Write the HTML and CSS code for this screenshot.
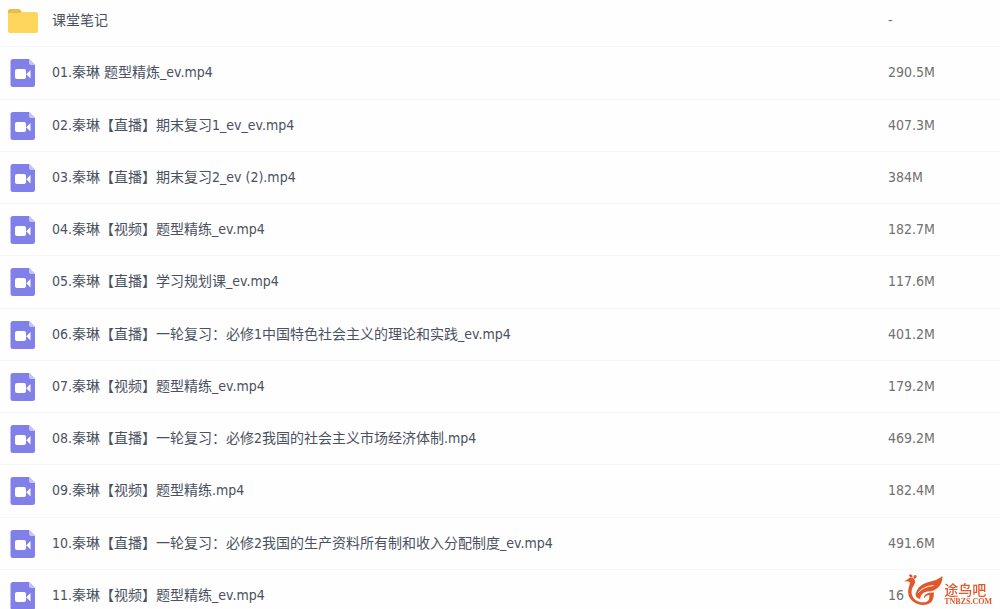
FILE: index.html
```html
<!DOCTYPE html>
<html lang="zh-CN">
<head>
<meta charset="utf-8">
<title>课堂笔记</title>
<link rel="stylesheet" href="styles.css">
</head>
<body>
<svg class="symbols" aria-hidden="true">
  <symbol id="folder" viewBox="0 0 30 30">
    <path fill="#e9bd49" d="M2 4h9.500l3 3.500V11H0V6q0-2 2-2z"/>
    <path fill="#ffd65c" d="M0 9q0-1 1-1h10l2.500-1H28q2 0 2 2v17q0 2-2 2H2q-2 0-2-2z"/>
  </symbol>
  <symbol id="video" viewBox="0 0 30 30">
    <path fill="#8080e8" d="M5 2h16l6 6v19.500q0 2.500-2.500 2.500h-19.500q-2.500 0-2.500-2.500V4.500Q2.500 2 5 2z"/>
    <path fill="#c6c4fa" d="M21 2l6 6h-4q-2 0-2-2z"/>
    <rect x="7" y="12" width="11" height="10" rx="2" fill="#fff"/>
    <path fill="#fff" d="M18.500 17l4-4v8.500l-4-4z"/>
  </symbol>
</svg>
<main class="files">
  <table class="list">
    <tbody>
      <tr class="row"><td class="name"><a class="file" href="#"><svg class="icon"><use href="#folder"/></svg>课堂笔记</a></td><td class="size">-</td></tr>
      <tr class="row"><td class="name"><a class="file" href="#"><svg class="icon"><use href="#video"/></svg>01.秦琳 题型精炼_ev.mp4</a></td><td class="size">290.5M</td></tr>
      <tr class="row"><td class="name"><a class="file" href="#"><svg class="icon"><use href="#video"/></svg>02.秦琳【直播】期末复习1_ev_ev.mp4</a></td><td class="size">407.3M</td></tr>
      <tr class="row"><td class="name"><a class="file" href="#"><svg class="icon"><use href="#video"/></svg>03.秦琳【直播】期末复习2_ev (2).mp4</a></td><td class="size">384M</td></tr>
      <tr class="row"><td class="name"><a class="file" href="#"><svg class="icon"><use href="#video"/></svg>04.秦琳【视频】题型精练_ev.mp4</a></td><td class="size">182.7M</td></tr>
      <tr class="row"><td class="name"><a class="file" href="#"><svg class="icon"><use href="#video"/></svg>05.秦琳【直播】学习规划课_ev.mp4</a></td><td class="size">117.6M</td></tr>
      <tr class="row"><td class="name"><a class="file" href="#"><svg class="icon"><use href="#video"/></svg>06.秦琳【直播】一轮复习：必修1中国特色社会主义的理论和实践_ev.mp4</a></td><td class="size">401.2M</td></tr>
      <tr class="row"><td class="name"><a class="file" href="#"><svg class="icon"><use href="#video"/></svg>07.秦琳【视频】题型精练_ev.mp4</a></td><td class="size">179.2M</td></tr>
      <tr class="row"><td class="name"><a class="file" href="#"><svg class="icon"><use href="#video"/></svg>08.秦琳【直播】一轮复习：必修2我国的社会主义市场经济体制.mp4</a></td><td class="size">469.2M</td></tr>
      <tr class="row"><td class="name"><a class="file" href="#"><svg class="icon"><use href="#video"/></svg>09.秦琳【视频】题型精练.mp4</a></td><td class="size">182.4M</td></tr>
      <tr class="row"><td class="name"><a class="file" href="#"><svg class="icon"><use href="#video"/></svg>10.秦琳【直播】一轮复习：必修2我国的生产资料所有制和收入分配制度_ev.mp4</a></td><td class="size">491.6M</td></tr>
      <tr class="row"><td class="name"><a class="file" href="#"><svg class="icon"><use href="#video"/></svg>11.秦琳【视频】题型精练_ev.mp4</a></td><td class="size">16</td></tr>
    </tbody>
  </table>
</main>
<div class="brand">
  <svg class="bird" viewBox="0 0 40 32" aria-hidden="true">
    <g fill="#e2582c">
      <path d="M0 7.500L4 5Q7 2.500 9.500 4.500Q12.500 7 10 11Q6.500 16 8 21Q10 27 17 28.200Q23 29 25 25.500L25.500 21Q22 21 20 24.500Q19.500 21.500 23 19.500Q26 18.200 30 18.500Q30 29 23 30.500Q15 32 9 27.500Q2.500 22 4.500 14.500Q5.500 11 6 8.500Q4 6.500 0 7.500z"/>
      <path d="M11.500 20Q14 11 23 8.500Q33 6.500 38.500 2Q38.500 8 35.500 12Q31 17.500 23.500 17.500Q17 18 16 25Q11.500 24 11.500 20z"/>
      <path d="M6 3Q3.500 0 7 .5Q9 1 8.500 3.500z"/>
      <path d="M9.500 3.500Q9.500 0 12.500 1.500Q13 4 10 5z"/>
    </g>
    <path d="M14.500 18.500Q19 12.500 29.500 11.500" fill="none" stroke="#fefefe" stroke-width="1"/>
  </svg>
  <div class="words">
    <span class="title">途鸟吧</span>
    <span class="site">TNBZS.COM</span>
  </div>
</div>
</body>
</html>
```
FILE: styles.css
```css
body {
  margin: 0;
  background: #fefefe;
  color: #4a5160;
  font: 14px/20px "DejaVu Sans Condensed", "Noto Sans CJK SC", sans-serif;
}

.symbols {
  position: absolute;
  width: 0;
  height: 0;
}

.files {
  height: 100vh;
  overflow: hidden;
}

.list {
  width: 100%;
  table-layout: fixed;
  border-collapse: separate;
  border-spacing: 0;
}

.row {
  height: 52px;
}

.row:nth-child(4n + 2) {
  height: 53px;
}

.row:first-child {
  height: 47px;
}

.name,
.size {
  box-sizing: border-box;
  padding: 0 0 2px;
  border-bottom: 1px solid #f6f6f7;
  vertical-align: middle;
}

.row:first-child td {
  padding-bottom: 6px;
}

.name {
  padding-left: 8px;
}

.size {
  width: 112px;
  color: #707070;
}

.file {
  display: flex;
  align-items: center;
  gap: 14px;
  color: inherit;
  text-decoration: none;
  white-space: nowrap;
}

.icon {
  flex: none;
  width: 30px;
  height: 30px;
}

.brand {
  position: fixed;
  right: 8px;
  bottom: 3px;
  display: flex;
  align-items: flex-end;
  color: #e2582c;
}

.bird {
  width: 40px;
  height: 32px;
}

.words {
  display: flex;
  flex-direction: column;
}

.title {
  font: 500 14px/18px "Noto Sans CJK SC", sans-serif;
}

.site {
  font: bold 8px/8px "Liberation Serif", serif;
}
```
